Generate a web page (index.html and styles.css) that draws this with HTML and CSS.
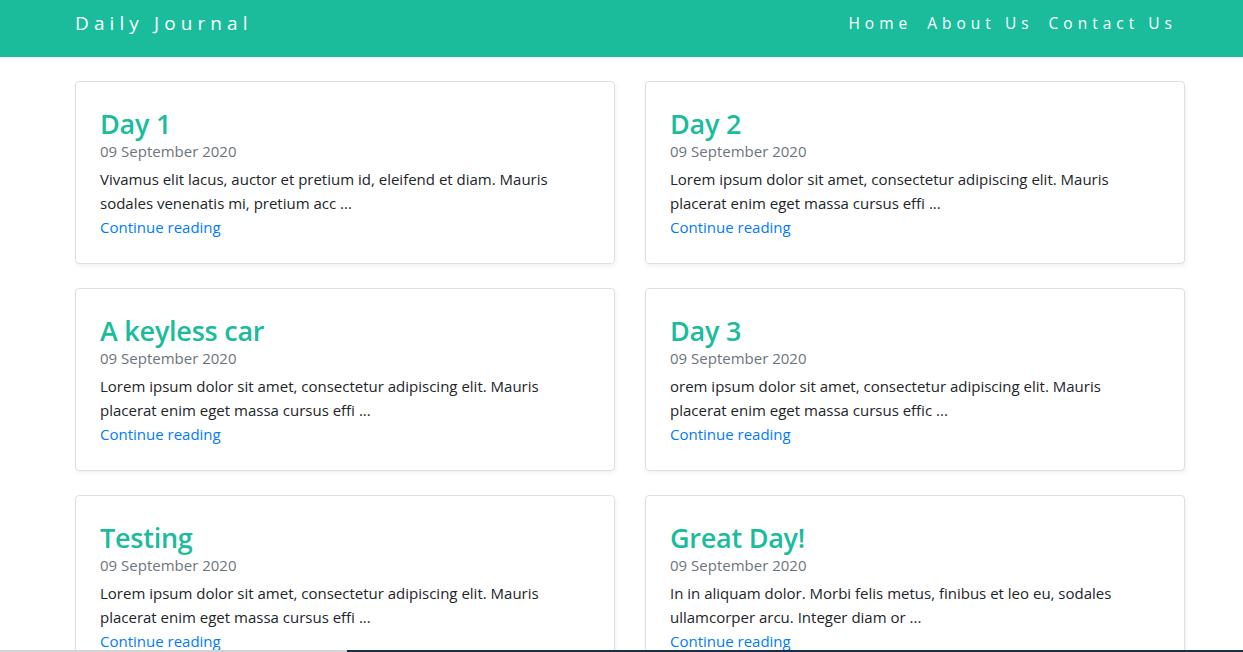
FILE: index.html
```html
<!DOCTYPE html>
<html lang="en">
<head>
<meta charset="utf-8">
<title>Daily Journal</title>
<link rel="stylesheet" href="styles.css">
</head>
<body>
<header class="navbar">
  <div class="nav-inner">
    <a class="brand" href="#">Daily Journal</a>
    <nav class="links">
      <a href="#">Home</a>
      <a href="#">About Us</a>
      <a href="#">Contact Us</a>
    </nav>
  </div>
</header>
<main class="grid">
  <article class="card">
    <h2 class="title">Day 1</h2>
    <p class="date">09 September 2020</p>
    <p class="text">Vivamus elit lacus, auctor et pretium id, eleifend et diam. Mauris sodales venenatis mi, pretium acc ...</p>
    <a class="more" href="#">Continue reading</a>
  </article>
  <article class="card">
    <h2 class="title">Day 2</h2>
    <p class="date">09 September 2020</p>
    <p class="text">Lorem ipsum dolor sit amet, consectetur adipiscing elit. Mauris placerat enim eget massa cursus effi ...</p>
    <a class="more" href="#">Continue reading</a>
  </article>
  <article class="card">
    <h2 class="title">A keyless car</h2>
    <p class="date">09 September 2020</p>
    <p class="text">Lorem ipsum dolor sit amet, consectetur adipiscing elit. Mauris placerat enim eget massa cursus effi ...</p>
    <a class="more" href="#">Continue reading</a>
  </article>
  <article class="card">
    <h2 class="title">Day 3</h2>
    <p class="date">09 September 2020</p>
    <p class="text">orem ipsum dolor sit amet, consectetur adipiscing elit. Mauris placerat enim eget massa cursus effic ...</p>
    <a class="more" href="#">Continue reading</a>
  </article>
  <article class="card">
    <h2 class="title">Testing</h2>
    <p class="date">09 September 2020</p>
    <p class="text">Lorem ipsum dolor sit amet, consectetur adipiscing elit. Mauris placerat enim eget massa cursus effi ...</p>
    <a class="more" href="#">Continue reading</a>
  </article>
  <article class="card">
    <h2 class="title">Great Day!</h2>
    <p class="date">09 September 2020</p>
    <p class="text">In in aliquam dolor. Morbi felis metus, finibus et leo eu, sodales ullamcorper arcu. Integer diam or ...</p>
    <a class="more" href="#">Continue reading</a>
  </article>
</main>
<div class="taskbar"><span class="tb-light"></span><span class="tb-dark"></span></div>
</body>
</html>
```
FILE: styles.css
```css
* { box-sizing: border-box; }
html, body { margin: 0; padding: 0; }
body {
  font-family: "Open Sans", "Noto Sans", "Liberation Sans", sans-serif;
  font-size: 15px;
  line-height: 24px;
  color: #212529;
  background: #fff;
  overflow: hidden;
}
a { text-decoration: none; }

.navbar {
  background: #1abc9c;
  height: 57px;
}
.nav-inner {
  width: 1102px;
  margin-left: 75px;
  height: 57px;
  display: flex;
  align-items: center;
  justify-content: space-between;
}
.brand {
  color: #fff;
  font-size: 19px;
  letter-spacing: 5.1px;
  padding-bottom: 12px;
}
.links {
  display: flex;
  gap: 15px;
  padding-bottom: 12px;
}
.links a {
  color: #fff;
  font-size: 15.5px;
  letter-spacing: 5px;
}

.grid {
  width: 1110px;
  margin: 24px 0 0 75px;
  display: grid;
  grid-template-columns: 540px 540px;
  column-gap: 30px;
  row-gap: 24px;
}
.card {
  border: 1px solid rgba(0,0,0,.125);
  border-radius: 4px;
  box-shadow: 1px 2px 4px rgba(0,0,0,.06);
  padding: 23px 24px 24px;
  height: 183px;
}
.title {
  margin: 0;
  color: #1abc9c;
  font-size: 27px;
  font-weight: 600;
  letter-spacing: -0.25px;
  line-height: 37px;
}
.date {
  margin: -3px 0 4px;
  color: #6c757d;
  font-size: 15px;
}
.text {
  margin: 0;
  font-size: 15px;
}
.more {
  color: #007bff;
  font-size: 15px;
}

.taskbar {
  position: fixed;
  left: 0;
  right: 0;
  bottom: 0;
  height: 2px;
  display: flex;
}
.tb-light { width: 347px; background: #d0d4d8; }
.tb-dark { flex: 1; background: #14304a; }
```
